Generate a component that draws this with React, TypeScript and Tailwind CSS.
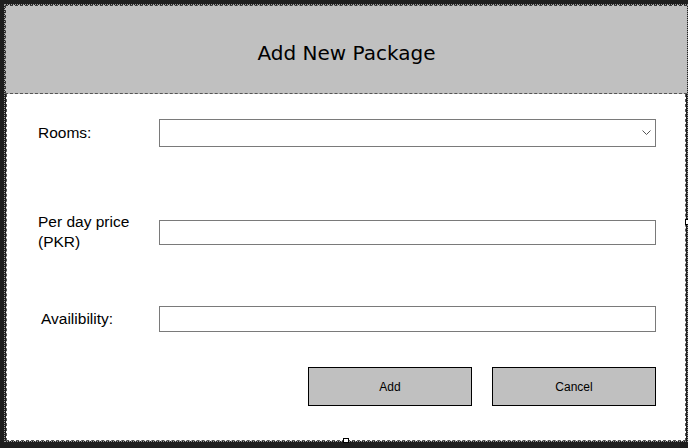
import React from "react";

export default function App() {
  return (
    <div className="relative w-[688px] h-[448px] bg-[#1e1e1e] pt-[4px] pl-[4px] overflow-hidden" style={{ fontFamily: '"Liberation Sans", Arial, sans-serif' }}>
      <div className="w-[684px] h-[438px] border border-dotted border-[#9a9a9a] flex flex-col">
        <div className="h-[89px] bg-[#c0c0c0] border-t border-l border-[#3a3a3a] flex items-center justify-center pt-[1px] border-b border-b-[#555] border-dashed">
          <span className="text-[20px] text-black mt-[6px]" style={{ fontFamily: '"Comic Sans MS", "Segoe Print", "DejaVu Sans", cursive' }}>
            Add New Package
          </span>
        </div>
        <div className="flex-1 bg-white border-l border-r border-b border-dashed border-[#555] ml-[1px] mr-[1px] pl-[31px] flex flex-col">
          <div className="mt-[25px] flex items-center">
            <div className="w-[121px] text-[15.5px] text-black">Rooms:</div>
            <div className="w-[497px] h-[28px] border border-[#7a7a7a] bg-white flex items-center justify-end pr-[4px]">
              <svg width="9" height="6" viewBox="0 0 9 6" fill="none">
                <path d="M0.5 0.5 L4.5 4.5 L8.5 0.5" stroke="#555" strokeWidth="1" />
              </svg>
            </div>
          </div>
          <div className="mt-[65px] flex items-center">
            <div className="w-[121px] text-[15.5px] leading-[20px] text-black">
              Per day price
              <br />
              (PKR)
            </div>
            <div className="w-[497px] h-[25px] border border-[#7a7a7a] bg-white" />
          </div>
          <div className="mt-[54px] flex items-center">
            <div className="w-[121px] text-[15.5px] text-black pl-[3px]">Availibility:</div>
            <div className="w-[497px] h-[26px] border border-[#7a7a7a] bg-white" />
          </div>
          <div className="mt-[35px] flex justify-end gap-[20px] w-[618px]">
            <button className="w-[164px] h-[39px] border border-black bg-[#c0c0c0] text-[12px] text-black">Add</button>
            <button className="w-[164px] h-[39px] border border-black bg-[#c0c0c0] text-[12px] text-black">Cancel</button>
          </div>
        </div>
      </div>
      <div className="absolute left-[685px] top-[219px] w-[4px] h-[6px] bg-white border border-black" />
      <div className="absolute left-[343px] top-[438px] w-[6px] h-[5px] bg-white border border-black" />
    </div>
  );
}
